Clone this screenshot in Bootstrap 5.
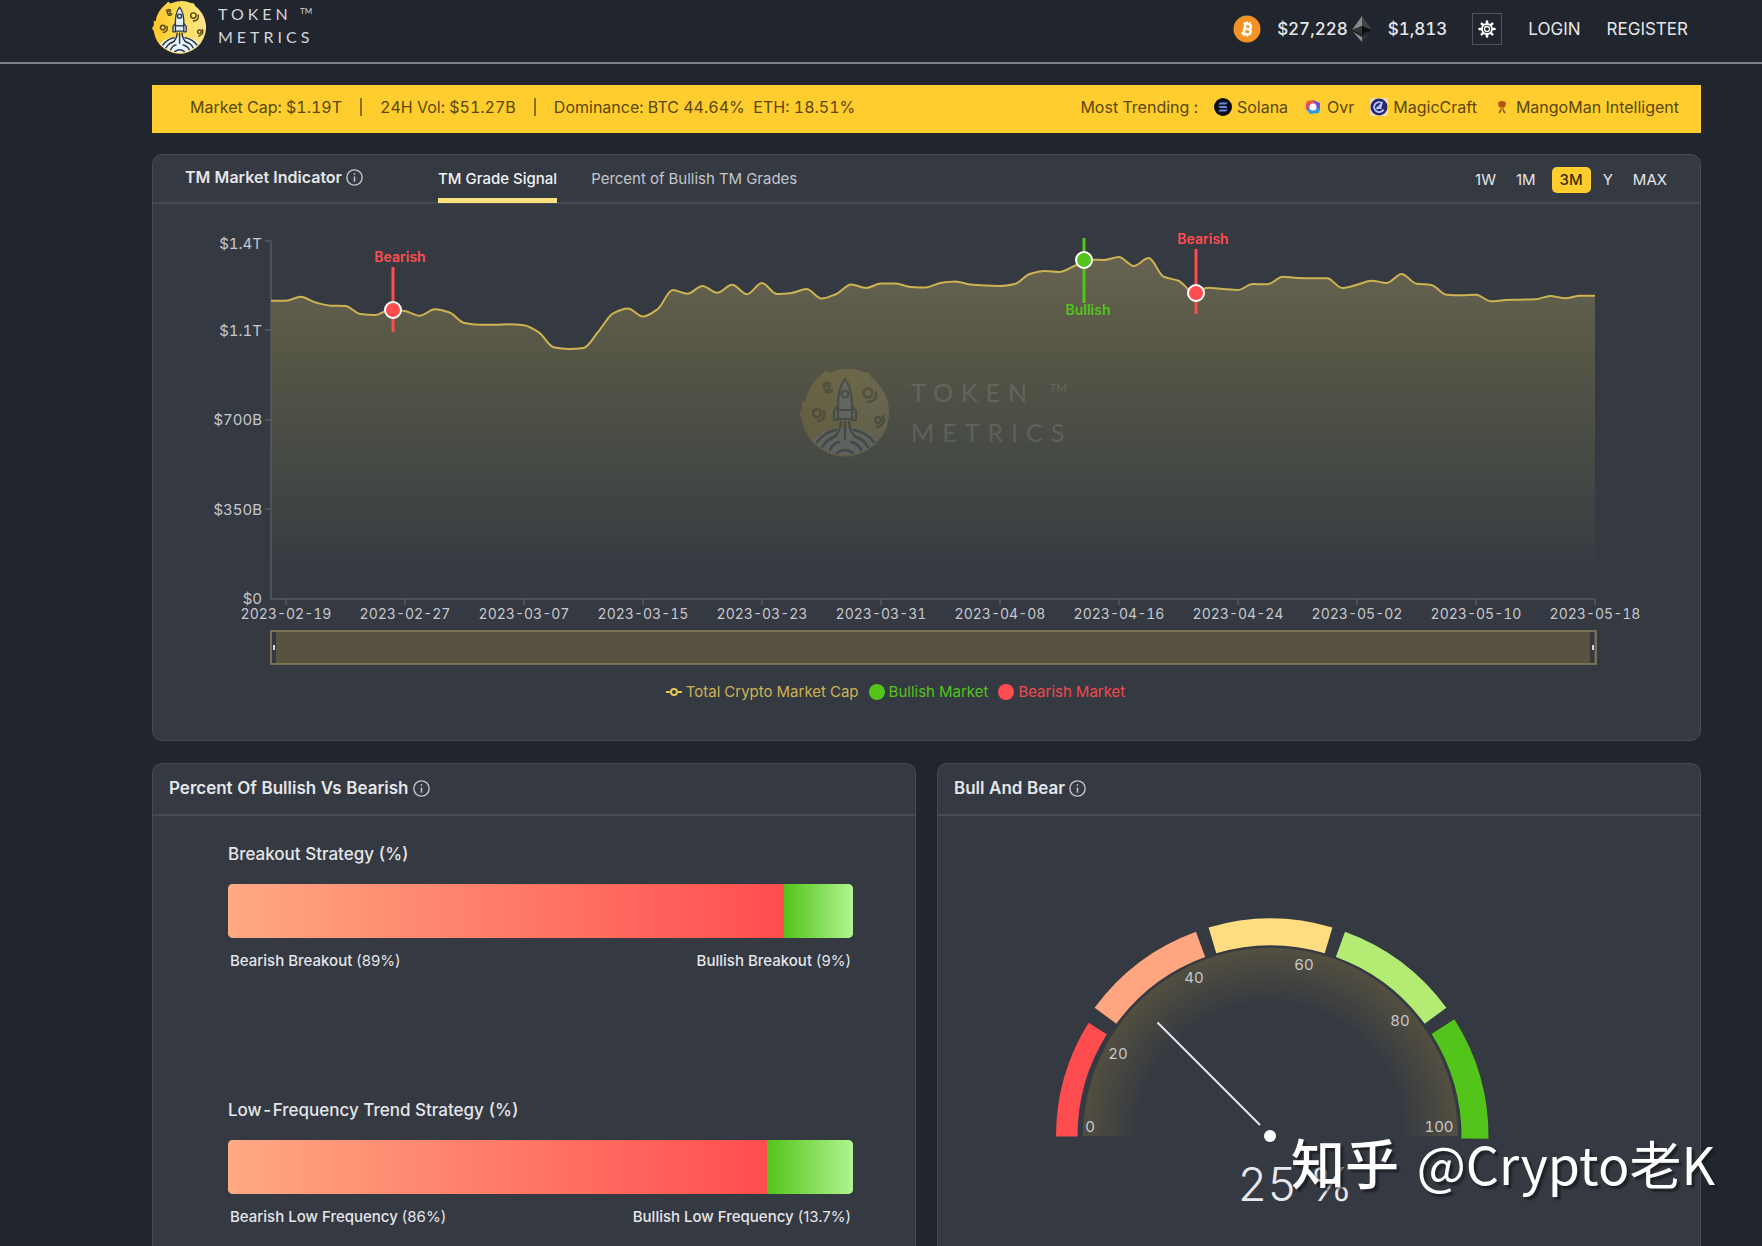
<!DOCTYPE html>
<html lang="en">
<head>
<meta charset="utf-8">
<meta name="viewport" content="width=device-width, initial-scale=1">
<title>Token Metrics – Market Indicator</title>
<link href="https://cdn.jsdelivr.net/npm/bootstrap@5.3.0/dist/css/bootstrap.min.css" rel="stylesheet">
<style>
:root { --page:#21262e; --panel:#353941; --line:#464a51; --gold:#ffce2e; --ink:#e4e6ea; }
body { background:var(--page); color:var(--ink); font-family:Inter,"Noto Sans CJK SC",sans-serif; font-size:16px; line-height:24px; font-variant-numeric:tabular-nums; overflow-x:hidden; }
a { color:inherit; text-decoration:none; }
.shell { padding-left:152px; padding-right:61px; }
.topbar { height:64px; border-bottom:2px solid #7f828c; padding-bottom:8px; }
.brand-name { font-family:Lato,sans-serif; font-size:16px; line-height:23px; letter-spacing:4px; color:#d3d5dc; }
.brand-name sup { font-size:8px; letter-spacing:0; top:-6px; }
.top-nav { padding:3px 13px 0 0; font-size:17px; }
.top-links { gap:26px; margin-left:25px; }
.quote { font-weight:500; font-size:17px; }
.theme-btn { width:30px; height:32px; border:1px solid #50545c; border-radius:0; }
.ticker { background:var(--gold); color:#594708; height:48px; margin-top:21px; padding:0 22px 4px 38px; }
.ticker .rule { width:2px; height:18px; background:#8a7017; }
.ticker a { gap:5px; }
.ticker .totals { gap:18px; }
.panel { background:var(--panel); border:1px solid var(--line); border-radius:10px; color:var(--ink); }
.chart-panel { margin-top:21px; }
.panel-head { height:49px; border-bottom:2px solid var(--line); padding:0 25px 0 32px; }
.panel-title { font-size:16px; line-height:24px; font-weight:600; margin:0; }
.chart-panel .panel-title { padding-top:10px; margin-right:75px; }
.low-panel .panel-title { font-size:17px; }
.signal-tabs { gap:34px; }
.signal-tabs .nav-link { color:#c3c6cc; font-size:15px; line-height:22px; padding:13px 0 8px; border-bottom:5px solid transparent; border-radius:0; }
.signal-tabs .nav-link.active { color:#f1f2f4; border-color:#fbe07d; font-weight:500; }
.range-btn { font-size:15px; line-height:26px; color:var(--ink); padding:0 8px; border:0; border-radius:5px; }
.range-btn.active { background:var(--gold); color:#3c3003; font-weight:500; }
.chart text { font-family:Inter,sans-serif; font-size:15px; fill:#c6c8cd; }
.chart #dates text { font-size:14px; }
.chart .mark-label { font-size:14px; font-weight:600; }
.chart .bear-text { fill:#ff4d4f; }
.chart .bull-text { fill:#52c41a; }
.chart .wm-text { font-family:Lato,sans-serif; font-size:25px; letter-spacing:8px; fill:#fff; }
.chart .wm-tm { font-family:Lato,sans-serif; font-size:11px; fill:#fff; }
.chart .gauge-value { font-size:46px; font-weight:300; fill:#e8e9ee; }
.legend-row { font-size:15px; line-height:22px; gap:10px; margin:12px 62px 37px 0; }
.cap-key { color:#cdb352; }
.bull-key { color:#52c41a; }
.bear-key { color:#f04a4e; }
.lower-row { --bs-gutter-x:21px; margin-top:22px; }
.low-head { height:52px; padding:0 16px 2px; }
.low-panel { border-bottom:0; border-radius:10px 10px 0 0; }
.strategy { margin:25px 62px 0 75px; }
.strategy + .strategy { margin-top:125px; }
.strategy h3 { font-size:17px; line-height:26px; font-weight:500; margin:0 0 17px; }
.strategy .progress { height:54px; border-radius:5px; background:#a9ef85; }
.bear-bar { background:linear-gradient(90deg,#ffa982,#ff4d4f); }
.bull-bar { background:linear-gradient(90deg,#52c41a,#b1f48f); }
.strategy p { font-size:15px; line-height:22px; margin:12px 2px 0; font-weight:500; font-variant-numeric:normal; }
.strategy p small { font-size:15px; font-weight:400; }
.stamp { position:absolute; right:47px; top:1125px; color:#fff; font-family:"Noto Sans CJK SC",sans-serif; font-size:52px; line-height:74px; text-shadow:3px 3px 2px rgba(20,22,26,.65); pointer-events:none; }
.stamp b { font-weight:500; font-size:54px; margin-right:6px; }
</style>
</head>
<body>
<svg width="0" height="0" class="position-absolute" aria-hidden="true">
  <defs>
    <linearGradient id="moonFill" x1="0" y1="0" x2="1" y2="0"><stop offset="0" stop-color="#ffc627"/><stop offset=".5" stop-color="#ffdc52"/><stop offset="1" stop-color="#ffe591"/></linearGradient>
    <symbol id="moon" viewBox="0 0 90 90">
      <clipPath id="disc"><circle cx="46" cy="45" r="43"/></clipPath>
      <path d="M22 8l5-5 4 3a43 43 0 0 1 34-1l5 1 2 4a43 43 0 1 1-52 71 43 43 0 0 1-17-29l-3-5 3-5V34l3 2a43 43 0 0 1 16-28z" fill="url(#moonFill)"/>
      <g clip-path="url(#disc)">
        <ellipse cx="46" cy="84" rx="37" ry="23" fill="#e9f2fa"/>
        <g fill="none" stroke="#28384b" stroke-width="2.4" stroke-linecap="round">
          <path d="M18 75q8-10 19-12M55 63q12 2 20 12M23 80q6-9 14-11M55 69q9 2 14 11M31 83q3-7 9-8M52 75q8 2 10 8M38 86q8-6 16 0"/>
          <path d="M42 55q-1 13-10 17M46 55v17M50 55q1 13 10 17"/>
        </g>
      </g>
      <g stroke="#28384b" stroke-width="2.2" stroke-linejoin="round" fill="#e1edf7">
        <path d="M46 12q-8 10-7 31h14q1-21-7-31z"/><path d="M39 39l-4 5v9h4zM53 39l4 5v9h-4zM39 43h14v9H39z"/><circle cx="46" cy="27" r="3.5" fill="#b9d4e8"/>
      </g>
      <g fill="none" stroke="#5d4711" stroke-width="2.4" stroke-linecap="round">
        <circle cx="18" cy="46" r="4"/><path d="M25 44q2 9-6 10"/>
        <circle cx="69" cy="26" r="4.500"/><path d="M77 25q2 9-8 10"/>
        <circle cx="79" cy="53" r="3"/><path d="M84 49q3 9-6 11"/>
        <circle cx="28" cy="21" r="2.500"/><path d="M24 18q3-4 7-1M33 23q-2 4-6 2"/>
      </g>
    </symbol>
    <symbol id="info" viewBox="0 0 16 16"><circle cx="8" cy="8" r="7.200" fill="none" stroke="#c3c6cc" stroke-width="1.300"/><path d="M8 7v5M8 4v1.500" stroke="#c3c6cc" stroke-width="1.400"/></symbol>
  </defs>
</svg>

<div class="min-vh-100 d-flex flex-column position-relative">
  <header class="topbar shell d-flex align-items-center">
    <a href="#" class="d-flex align-items-center">
      <svg width="54" height="54" aria-hidden="true"><use href="#moon"/></svg>
      <span class="brand-name ms-2 ps-1 pb-1">TOKEN <sup>TM</sup><br>METRICS</span>
    </a>
    <nav class="top-nav ms-auto d-flex align-items-center">
      <svg width="28" height="28" viewBox="0 0 28 28" class="me-3" role="img" aria-label="Bitcoin"><circle cx="14" cy="14" r="13.500" fill="#f39326"/><g fill="none" stroke="#fff" stroke-width="2.400" transform="rotate(12 14 14)"><path d="M9.500 9h5.500a2.400 2.400 0 0 1 0 4.900h-3.500 4.200a2.600 2.600 0 0 1 0 5.200H9.500M11.500 9v10"/><path d="M12.500 6.500V9M15.500 6.500V9M12.500 19v2.500M15.500 19v2.500" stroke-width="1.500"/></g></svg>
      <span class="quote">$27,228</span>
      <svg width="20" height="26" viewBox="0 0 20 26" class="ms-1 me-3" role="img" aria-label="Ethereum"><path d="M10 0L0 14l10-4z" fill="#8a8a8a"/><path d="M10 0l10 14-10-4z" fill="#454545"/><path d="M0 14l10-4v8z" fill="#353535"/><path d="M20 14l-10-4v8z" fill="#101010"/><path d="M1 16l9 10v-5z" fill="#8d8d8d"/><path d="M19 16l-9 10v-5z" fill="#343434"/></svg>
      <span class="quote">$1,813</span>
      <div class="top-links d-flex align-items-center">
        <button class="btn theme-btn p-0 d-flex align-items-center justify-content-center" aria-label="Toggle theme">
          <svg width="18" height="18" viewBox="-9 -9 18 18"><g stroke="#fff" stroke-width="2.600" stroke-linecap="round"><path d="M0-7.500V7.500M-7.500 0H7.500M-5.300-5.300L5.300 5.300M5.300-5.300L-5.300 5.300"/></g><circle r="5" fill="#21262e" stroke="#fff" stroke-width="1.800"/><circle r="2.500" fill="none" stroke="#fff" stroke-width="1.300"/></svg>
        </button>
        <a href="#">LOGIN</a>
        <a href="#">REGISTER</a>
      </div>
    </nav>
  </header>

  <main class="shell flex-grow-1 d-flex flex-column">
    <section class="ticker d-flex align-items-center justify-content-between text-nowrap">
      <div class="totals d-flex align-items-center">
        <span>Market Cap: $1.19T</span><span class="rule"></span>
        <span>24H Vol: $51.27B</span><span class="rule"></span>
        <span>Dominance: BTC 44.64% &nbsp;ETH: 18.51%</span>
      </div>
      <div class="d-flex align-items-center gap-3">
        <span>Most Trending :</span>
        <a href="#" class="d-flex align-items-center"><svg width="18" height="18" viewBox="0 0 18 18"><circle cx="9" cy="9" r="9" fill="#0b0b14"/><path d="M6 4.500h8l-2 2H4zM4 8h8l2 2H6zM6 11.500h8l-2 2H4z" fill="#6a8be0"/></svg>Solana</a>
        <a href="#" class="d-flex align-items-center"><svg width="18" height="18" viewBox="0 0 18 18"><path d="M3 3l7-1-1 7-7 3z" fill="#ef5a3c"/><path d="M9 2l7 3v8l-4-3z" fill="#7a4be0"/><path d="M2 4v7l5-1z" fill="#e2418c"/><path d="M2 11l4 5 9-1 1-5z" fill="#2f9be8"/><circle cx="9" cy="9" r="3.500" fill="#fff"/></svg>Ovr</a>
        <a href="#" class="d-flex align-items-center"><svg width="18" height="18" viewBox="0 0 18 18"><rect width="18" height="18" rx="2" fill="#ecdcb8"/><circle cx="9" cy="9" r="8.500" fill="#25286c"/><path d="M12.500 5.500a5 5 0 1 0 1 6M6.500 11l5-5-1 4h-4" fill="none" stroke="#b9c4ff" stroke-width="1.800"/></svg>MagicCraft</a>
        <a href="#" class="d-flex align-items-center"><svg width="18" height="18" viewBox="0 0 18 18"><path d="M5 6q0-3 4-3t4 3l-1 3H6z" fill="#b35412"/><path d="M7 9h4v3H7z" fill="#cb8a1c"/><path d="M8 12l-2 3M10 12l2 3" stroke="#7b5a10" stroke-width="1.500"/></svg>MangoMan Intelligent</a>
      </div>
    </section>

    <section class="panel chart-panel">
      <div class="panel-head d-flex align-items-start">
        <h2 class="panel-title d-flex align-items-center gap-1">TM Market Indicator <svg width="17" height="17" role="img" aria-label="About this indicator"><use href="#info"/></svg></h2>
        <ul class="nav signal-tabs">
          <li class="nav-item"><a class="nav-link active" href="#">TM Grade Signal</a></li>
          <li class="nav-item"><a class="nav-link" href="#">Percent of Bullish TM Grades</a></li>
        </ul>
        <div class="ms-auto d-flex pt-2 mt-1" id="ranges">
          <button class="btn range-btn">1W</button>
          <button class="btn range-btn ms-1 me-2">1M</button>
          <button class="btn range-btn active">3M</button>
          <button class="btn range-btn ms-1">Y</button>
          <button class="btn range-btn ms-1">MAX</button>
        </div>
      </div>
      <svg class="chart d-block w-100" viewBox="153 204 1547 465" role="img" aria-label="Total crypto market cap">
        <defs>
          <linearGradient id="areaFill" x1="0" y1="257" x2="0" y2="599" gradientUnits="userSpaceOnUse"><stop offset="0" stop-color="#fbe07d" stop-opacity=".25"/><stop offset=".28" stop-color="#eedc60" stop-opacity=".18"/><stop offset=".8" stop-color="#607050" stop-opacity=".16"/><stop offset="1" stop-color="#353941" stop-opacity="0"/></linearGradient>
        </defs>
        <path id="area" fill="url(#areaFill)"/>
        <g opacity=".14"><use href="#moon" x="799" y="367" width="90" height="90"/></g>
        <g opacity=".11">
          <text x="911" y="402" class="wm-text">TOKEN</text>
          <text x="1050" y="392" class="wm-tm">TM</text>
          <text x="911" y="442" class="wm-text">METRICS</text>
        </g>
        <path d="M265 241h6V599H1595M265 330h6M265 420h6M265 509h6" fill="none" stroke="#565a61" stroke-width="1.500"/>
        <path id="ticks" stroke="#565a61" stroke-width="1.500"/>
        <path id="curve" fill="none" stroke="#cdb352" stroke-width="2"/>
        <g text-anchor="end"><text x="262" y="249">$1.4T</text><text x="262" y="336">$1.1T</text><text x="262" y="425">$700B</text><text x="262" y="515">$350B</text><text x="262" y="604">$0</text></g>
        <g id="dates" text-anchor="middle"></g>
        <g stroke-width="3">
          <path d="M393 267v65M1196 249v65" stroke="#ff4d4f"/><path d="M1084 238v65" stroke="#52c41a"/>
          <g stroke="#fff" stroke-width="2"><circle cx="393" cy="310" r="8" fill="#ff4d4f"/><circle cx="1196" cy="293" r="8" fill="#ff4d4f"/><circle cx="1084" cy="260" r="8" fill="#52c41a"/></g>
        </g>
        <g text-anchor="middle"><text x="400" y="262" class="mark-label bear-text">Bearish</text><text x="1203" y="244" class="mark-label bear-text">Bearish</text><text x="1088" y="315" class="mark-label bull-text">Bullish</text></g>
        <rect x="271" y="631" width="1325" height="33" fill="#585340" stroke="#85805a" stroke-width="1.500"/>
        <path d="M272 632h4v31h-4zM1590 632h4v31h-4z" fill="#35383c"/><path d="M273 645h2v5h-2zM1592 645h2v5h-2z" fill="#d5d6d8"/>
      </svg>
      <div class="legend-row d-flex justify-content-center">
        <span class="cap-key d-flex align-items-center gap-1"><svg width="16" height="14" viewBox="0 0 16 14"><path d="M0 7h4M12 7h4" stroke="#e2c55a" stroke-width="2"/><circle cx="8" cy="7" r="3" fill="none" stroke="#e2c55a" stroke-width="2"/></svg>Total Crypto Market Cap</span>
        <span class="bull-key d-flex align-items-center gap-1"><svg width="16" height="16"><circle cx="8" cy="8" r="8" fill="#52c41a"/></svg>Bullish Market</span>
        <span class="bear-key d-flex align-items-center gap-1"><svg width="16" height="16"><circle cx="8" cy="8" r="8" fill="#ff4d4f"/></svg>Bearish Market</span>
      </div>
    </section>

    <div class="row flex-grow-1 lower-row">
      <div class="col-6 d-flex">
        <section class="panel low-panel flex-grow-1">
          <div class="panel-head low-head d-flex align-items-center"><h2 class="panel-title d-flex align-items-center gap-1">Percent Of Bullish Vs Bearish <svg width="17" height="17" role="img" aria-label="About"><use href="#info"/></svg></h2></div>
          <div class="strategy">
            <h3>Breakout Strategy (%)</h3>
            <div class="progress"><div class="progress-bar bear-bar" style="width:89%"></div><div class="progress-bar bull-bar" style="width:11%"></div></div>
            <p class="d-flex justify-content-between"><span>Bearish Breakout <small>(89%)</small></span><span>Bullish Breakout <small>(9%)</small></span></p>
          </div>
          <div class="strategy">
            <h3>Low-Frequency Trend Strategy (%)</h3>
            <div class="progress"><div class="progress-bar bear-bar" style="width:86.2%"></div><div class="progress-bar bull-bar" style="width:13.8%"></div></div>
            <p class="d-flex justify-content-between"><span>Bearish Low Frequency <small>(86%)</small></span><span>Bullish Low Frequency <small>(13.7%)</small></span></p>
          </div>
        </section>
      </div>
      <div class="col-6 d-flex">
        <section class="panel low-panel flex-grow-1">
          <div class="panel-head low-head d-flex align-items-center"><h2 class="panel-title d-flex align-items-center gap-1">Bull And Bear <svg width="17" height="17" role="img" aria-label="About"><use href="#info"/></svg></h2></div>
          <svg class="chart d-block w-100" viewBox="938 815 762 429" role="img" aria-label="Bull and bear gauge, 25 %">
            <defs><radialGradient id="glow" cx="1270" cy="1135" r="187" gradientUnits="userSpaceOnUse"><stop offset=".7" stop-color="#353941"/><stop offset="1" stop-color="#524f40"/></radialGradient></defs>
            <path d="M1083 1135a187 188 0 0 1 375 0z" fill="url(#glow)"/>
            <g id="segments"></g>
            <path d="M1157.500 1021.500L1260 1124" stroke="#e6e7ee" stroke-width="2"/><circle cx="1270" cy="1135" r="6" fill="#fff"/>
            <g text-anchor="middle"><text x="1090" y="1131">0</text><text x="1118" y="1058">20</text><text x="1194" y="982">40</text><text x="1304" y="969">60</text><text x="1400" y="1025">80</text><text x="1439" y="1131">100</text></g>
            <text x="1295" y="1200" text-anchor="middle" class="gauge-value">25 %</text>
          </svg>
        </section>
      </div>
    </div>
  </main>
  <div class="stamp text-nowrap"><b>知乎</b> @Crypto老K</div>
</div>

<script>
// Daily heights of the total market cap line, 2023-02-18 to 2023-05-18
const ys=[300.7,300.7,296.7,302.5,305.7,306,314,315,309.7,311,315.7,309.3,312.5,323,324.7,324.7,324.3,325.3,332.3,347.3,349,348,331.7,313.3,308.5,316.6,309,290,293.7,286,292.7,284.7,294.3,283,294,293,289,298.5,294,284.5,288,283.5,283.5,287,287.5,283,281.5,284.5,285.5,286,284,274,271,272,266,259.7,260,257,266,258,276.7,280.7,292,287.7,289,290,284,284.3,276.7,278,278.3,278.3,288,284.7,280.7,283,274,283.7,285,294.7,295.3,294.7,301.3,300,299.7,299.3,296,298.3,295.7,295.7];
const x0=271, step=1324/89, n=ys.length;
// Monotone slopes keep the curve from overshooting its points
const m=ys.map((y,i)=>{ if(!i||i===n-1) return 0; const a=y-ys[i-1], b=ys[i+1]-y; return a*b<=0?0:2*a*b/(a+b); });
let d=`M${x0} ${ys[0]}`;
for(let i=1;i<n;i++){ const xa=x0+step*(i-1), xb=x0+step*i; d+=`C${xa+step/3} ${ys[i-1]+m[i-1]/3} ${xb-step/3} ${ys[i]-m[i]/3} ${xb} ${ys[i]}`; }
document.getElementById('curve').setAttribute('d',d);
document.getElementById('area').setAttribute('d',d+'V599H271Z');
const days=['2023-02-19','2023-02-27','2023-03-07','2023-03-15','2023-03-23','2023-03-31','2023-04-08','2023-04-16','2023-04-24','2023-05-02','2023-05-10','2023-05-18'];
document.getElementById('dates').innerHTML=days.map((t,i)=>`<text x="${Math.round(286+i*119)}" y="619">${t}</text>`).join('');
document.getElementById('ticks').setAttribute('d',days.map((t,i)=>`M${286+i*119} 599v6`).join(''));
// Gauge segments: start angle, end angle, inner radius, outer radius, colour
const pt=(a,r)=>`${1270.5-r*Math.cos(a*Math.PI/180)} ${1135.5-r*Math.sin(a*Math.PI/180)}`;
document.getElementById('segments').innerHTML=[[0,32,193,214.5,'#ff4d4f'],[36.2,70,191,218,'#ffa57f'],[73.5,106.5,191,218,'#ffdd80'],[110,143.8,191,218,'#b4ec73'],[147.5,180.6,191,218,'#52c41a']]
 .map(([a,b,r,R,c])=>`<path fill="${c}" d="M${pt(a,R)}A${R} ${R} 0 0 1 ${pt(b,R)}L${pt(b,r)}A${r} ${r} 0 0 0 ${pt(a,r)}Z"/>`).join('');
document.querySelectorAll('#ranges .btn').forEach(b=>b.addEventListener('click',()=>{document.querySelector('#ranges .active').classList.remove('active');b.classList.add('active');}));
</script>
<script src="https://cdn.jsdelivr.net/npm/bootstrap@5.3.0/dist/js/bootstrap.bundle.min.js"></script>
</body>
</html>
